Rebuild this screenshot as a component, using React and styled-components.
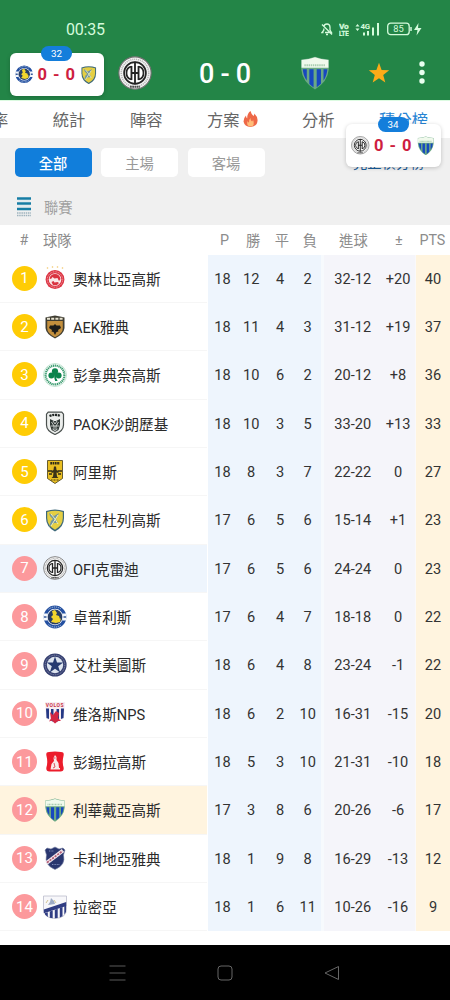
import React from 'react';
import styled, { createGlobalStyle } from 'styled-components';

const GlobalStyle = createGlobalStyle`
    * {
        box-sizing: border-box;
    }

    body {
        margin: 0;
        background: #fff;
        font-family: Roboto, "Noto Sans CJK TC", sans-serif;
        color: #333;
    }

    svg {
        display: block;
        flex: none;
    }
`;

const Screen = styled.div`
    position: relative;
    display: flex;
    flex-direction: column;
    width: 450px;
    height: 1000px;
    overflow: hidden;
    background: #fff;
`;

const Header = styled.header`
    height: 100px;
    background: #238547;
    color: #fff;
`;

const StatusBar = styled.div`
    display: flex;
    align-items: center;
    justify-content: space-between;
    height: 46px;
    padding: 12px 28px 0 66px;
    color: #d5fbdc;
    font-size: 16px;
    letter-spacing: -0.2px;
`;

const StatusIcons = styled.div`
    display: flex;
    align-items: center;
    gap: 6px;
`;

const MatchBar = styled.div`
    display: grid;
    grid-template-columns: 34px 146px 34px 22px 6px;
    column-gap: 0;
    align-items: center;
    height: 54px;
    padding-left: 118px;
`;

const MatchScore = styled.div`
    padding-top: 2px;
    text-align: center;
    font-size: 27px;
    font-weight: 500;
    letter-spacing: -0.3px;
    line-height: 30px;
`;

const StarIcon = styled.svg`
    margin-left: 36px;
`;

const MoreIcon = styled.svg`
    margin-left: 65px;
`;

const Tabs = styled.nav`
    display: flex;
    flex: none;
    align-items: center;
    height: 38px;
    margin-left: -8px;
    gap: 44.5px;
    padding-bottom: 1px;
    border-top: 1px solid #dcfbe1;
    font-size: 16.3px;
    white-space: nowrap;
`;

const Tab = styled.div`
    display: flex;
    align-items: center;
    gap: 3px;
    color: ${props => props.$active ? '#2784d3' : '#666'};
`;

const Filters = styled.section`
    height: 87px;
    flex: none;
    background: #f0f0f0;
`;

const FilterRow = styled.div`
    display: flex;
    align-items: center;
    gap: 9.5px;
    padding: 10px 0 0 14.5px;
`;

const FilterButton = styled.button`
    width: 77px;
    height: 29px;
    padding: 0 0 1px;
    border: none;
    border-radius: 5px;
    background: ${props => props.$active ? '#117edb' : '#fff'};
    color: ${props => props.$active ? '#fff' : '#999'};
    font-family: inherit;
    font-size: 14.3px;
    font-weight: ${props => props.$active ? 500 : 400};
`;

const TableLink = styled.span`
    display: flex;
    gap: 11px;
    margin: -3px 0 0 79px;
    color: #195d9b;
    font-size: 14.3px;
    white-space: nowrap;
`;

const League = styled.div`
    display: flex;
    align-items: center;
    gap: 13px;
    padding: 19px 0 0 17px;
    color: #a0a0a0;
    font-size: 14.3px;
    line-height: 20px;
`;

const LeagueName = styled.span`
    padding-top: 2px;
`;

const TableHead = styled.div`
    display: grid;
    grid-template-columns: 43px 167px 28.8px 28.8px 28.8px 27px 60px 31px 36px;
    align-items: center;
    flex: none;
    height: 29.6px;
    color: #8c8c8c;
    font-size: 14.3px;
    text-align: center;
    white-space: nowrap;
`;

const HeadLabel = styled.span`
    text-align: ${props => props.$left ? 'left' : 'center'};
    padding-left: ${props => props.$indent || 0}px;
`;

const Row = styled.div`
    display: grid;
    grid-template-columns: 208px 116px 92px 34px;
    flex: none;
    height: 48.34px;
    font-size: 14.6px;
`;

const Team = styled.div`
    display: grid;
    grid-template-columns: 25px 24px 1fr;
    column-gap: 6px;
    align-items: center;
    margin-right: 1px;
    padding-left: 12px;
    border-bottom: 1px solid #f6f6f6;
    background: ${props => props.$background || '#fff'};
    color: #2a2a2a;
    white-space: nowrap;
`;

const Rank = styled.span`
    display: flex;
    align-items: center;
    justify-content: center;
    width: 25px;
    height: 25px;
    border-radius: 50%;
    background: ${props => props.$top ? '#ffcc05' : '#fc999c'};
    color: #fff;
    font-size: 15px;
`;

const Record = styled.div`
    display: grid;
    grid-template-columns: 28.8px 28.8px 28.8px 26.6px;
    align-items: center;
    border-right: 3px solid #f7fafd;
    background: #eef5fd;
    text-align: center;
`;

const Goals = styled.div`
    display: grid;
    grid-template-columns: 57.5px 33px;
    align-items: center;
    border-right: 1.5px solid #faf9fa;
    background: #f5f5fa;
    text-align: center;
    white-space: nowrap;
`;

const Points = styled.div`
    display: flex;
    align-items: center;
    justify-content: center;
    background: #fff4df;
`;

const NavBar = styled.footer`
    display: flex;
    align-items: center;
    gap: 91px;
    height: 55px;
    margin-top: auto;
    padding-left: 109px;
    background: #000;
`;

const FloatingCard = styled.div`
    position: absolute;
    top: ${props => props.$top}px;
    left: ${props => props.$left}px;
    display: flex;
    align-items: center;
    justify-content: space-between;
    width: 94.5px;
    height: 43px;
    padding: 0 5px;
    border-radius: 6px;
    background: #fff;
    box-shadow: 0 1px 4px rgba(0, 0, 0, 0.2);
    color: #ce1e40;
    font-size: 16.5px;
    font-weight: 700;
    word-spacing: 2px;
`;

const Minute = styled.span`
    position: absolute;
    top: -7.5px;
    left: 31.5px;
    width: 31px;
    height: 15px;
    border-radius: 8px;
    background: #147edb;
    color: #fff;
    font-size: 9.8px;
    font-weight: 400;
    line-height: 15px;
    text-align: center;
`;

const shield = 'M3 3Q12 0 21 3V10Q21 19 12 23.5Q3 19 3 10Z';

const crests = {
    olympiacos: (
        <>
            <g fill="#f1c66b">
                <circle cx="4.5" cy="2" r=".8" />
                <circle cx="9.5" cy="1" r=".8" />
                <circle cx="14.5" cy="1" r=".8" />
                <circle cx="19.5" cy="2" r=".8" />
            </g>
            <circle cx="12" cy="13.5" r="9.4" fill="#dc3443" />
            <circle cx="12" cy="13.5" r="7.7" fill="none" stroke="#f4a9ae" strokeWidth=".9" strokeDasharray="1 .7" />
            <circle cx="12" cy="13.5" r="6.3" fill="#f9e9e9" />
            <path d="M6.5 12.5Q7.500 8 12 8t5.500 5l-1.500 2-1.500-3-3 .5-2-1.500-1.500 2z" fill="#d93340" />
            <path d="M8.500 16l2-1 1 1.500 3-.5 1.500 1-2 2h-4z" fill="#d93340" />
        </>
    ),
    aek: (
        <>
            <path d="M2.500 2.500L7 1.500 12 .5l5 1 4.500 1V13Q21 19 12 23.500 3 19 2.500 13z" fill="#3f3d32" />
            <path d="M4.200 6h15.600v7q0 5.500-7.800 9.200Q4.200 18.500 4.200 13z" fill="#c38f3d" />
            <path d="M4 3.800h16" stroke="#e8e3d0" strokeWidth="2" strokeDasharray="3 1.200" />
            <path d="M12 9l1.500 1.500L17 10.500l1 2.500-3 2 .5 1.500-2 .5L12 20l-1.500-3-2-.5L9 15l-3-2 1-2.500 3.500 0z" fill="#1d1c19" />
        </>
    ),
    panathinaikos: (
        <>
            <circle cx="12" cy="12" r="11.5" fill="#fff" stroke="#a8d8bf" strokeWidth=".7" />
            <circle cx="12" cy="12" r="9.4" fill="none" stroke="#3c9c70" strokeWidth="2.2" strokeDasharray="1.3 .6" />
            <g fill="#09834b">
                <circle cx="12" cy="8.3" r="3.1" />
                <circle cx="8.4" cy="12.4" r="3" />
                <circle cx="15.6" cy="12.4" r="3" />
                <path d="M11 11h2q-.5 4 1.6 7h-2.4Q11 15 11 11z" />
            </g>
        </>
    ),
    paok: (
        <>
            <path d="M5.2 1.2h13.6l1.700 2V14q0 6-8.500 9.500Q3.500 20 3.500 14V3.200z" fill="#eceeec" stroke="#4a504e" strokeWidth="1.200" />
            <path d="M6.500 5q5.500-2.300 11 0" fill="none" stroke="#202524" strokeWidth="2.300" strokeDasharray="2.100 .7" />
            <path d="M7 8l4 2h2l4-2v6l-1.500 5-3.500 2L8.500 19 7 14z" fill="#303735" />
            <path d="M8.500 11l2.500 4v4M15.500 11L13 15v4M10 10l2 3 2-3M7.800 15h8.400M9.500 18l2.500 2 2.500-2" stroke="#e5e7e5" strokeWidth=".8" fill="none" />
        </>
    ),
    aris: (
        <>
            <path d="M4.500.5h15v18L12 23.500 4.500 18.500z" fill="#eabf22" stroke="#453c17" strokeWidth=".8" />
            <path d="M7.300 3.300h9.500" stroke="#2c2918" strokeWidth="2.400" strokeDasharray="1.700 .6" />
            <path d="M11 6.500h2l.5 3.500 2 1v2l-2-.5.5 4 1.500 1.500h-7l1.500-1.500.5-4-2 .5v-2l2-1z" fill="#3b3218" />
            <path d="M5 11h4M15 11h4M6 14h3M15 14h3" stroke="#302a19" strokeWidth="1.300" />
            <path d="M8 20h8" stroke="#463b18" strokeWidth="1.200" strokeDasharray="1 .5" />
        </>
    ),
    panetolikos: (
        <>
            <path d={shield} fill="#3d6879" />
            <path d="M4.200 4Q12 1.500 19.800 4v6q0 7.500-7.800 11.700Q4.200 17.500 4.200 10z" fill="#e5cf43" />
            <path d="M6 5l5 3 5-3-3 6 2 4-4 0-5 4 2-6 2-2-3-3z" fill="#7295a0" />
            <path d="M8 6l4 5 3 5M15 7l-7 11" stroke="#edf0bd" strokeWidth="1" fill="none" />
        </>
    ),
    ofi: (
        <>
            <circle cx="12" cy="12" r="11.4" fill="#f4f4f4" stroke="#6f6f6f" strokeWidth=".8" />
            <circle cx="12" cy="12" r="9.700" fill="none" stroke="#b4b4b4" strokeWidth="1.100" strokeDasharray=".8 .6" />
            <circle cx="12" cy="12" r="7.700" fill="#fff" stroke="#242424" strokeWidth="1.200" />
            <path d="M12 4v16M9.500 12h5M9.500 7v10M14.500 7v10" fill="none" stroke="#242424" strokeWidth="1.300" />
            <path d="M9.500 7.500Q6 8 6 12t3.500 4.500M14.500 7.500Q18 8 18 12t-3.500 4.500" fill="none" stroke="#242424" strokeWidth="1.200" />
            <path d="M8.500 21.700h7" stroke="#4a4a4a" strokeWidth="1.500" strokeDasharray="1.200 .4" />
        </>
    ),
    asteras: (
        <>
            <circle cx="12" cy="12" r="9.800" fill="#fff" stroke="#2450a1" strokeWidth="3.200" />
            <path d="M.5 8.500h4v7h-4zM19.500 8.500h4v7h-4z" fill="#f4f7fb" />
            <path d="M1 12h2.500M20.500 12H23" stroke="#345a9a" strokeWidth="1.700" />
            <path d="M5.500 4.300q6.500-4.700 13 0M5.500 19.700q6.500 4.700 13 0" fill="none" stroke="#b4c6dd" strokeWidth="1" strokeDasharray="1.200 .8" />
            <circle cx="12" cy="12" r="7.400" fill="#273c64" />
            <path d="M9 6l3-1 2 3-1 2 3 1 1 3 1-1-1 4-4 1-5-1 2-3-2-2 2-2z" fill="#f3d52d" />
        </>
    ),
    atromitos: (
        <>
            <circle cx="12" cy="12" r="11.600" fill="#353f70" />
            <circle cx="12" cy="12" r="9.800" fill="none" stroke="#8991b0" strokeWidth="1" strokeDasharray="1 .8" />
            <circle cx="12" cy="12" r="8.200" fill="#dde4ee" />
            <path d="M12 3.500l2 6.100h6.200l-5 3.700 2 6.200-5.200-3.800-5.200 3.800 2-6.200-5-3.700H10z" fill="#263b70" />
        </>
    ),
    volos: (
        <>
            <path d="M2 1h20l-1 16.500-9 5.300-9-5.300z" fill="#f7edf1" />
            <path d="M3 7.500h3V18l-2.500-1zM8 8h2.500v13L8 19.500zM13.500 8H16v11.500L13.500 21zM18 7.500h3L20.500 17l-2.500 1z" fill="#253985" />
            <path d="M7 11l3 3 3-4 3 2-1 5 3 3-3 0-3 2.500-3-3-3 1 2-3z" fill="#d32642" />
            <text x="12" y="5.800" textAnchor="middle" fontSize="5" fontWeight="700" fill="#ca3447" letterSpacing=".5">VOLOS</text>
        </>
    ),
    aelkorydallos: (
        <>
            <path d="M6 2q6-1 12 0 3.500 0 2.500 4-1.500 6 0 11 1 4.500-3 4.500H6.500q-4 0-3-4.500 1.500-5 0-11Q2.500 2 6 2z" fill="#ec1c2b" />
            <path d="M12 5l1.500 2v3l2 3 .5 5h1v1.500H7.500L8.500 14l2.500-3-.5-3z" fill="#f9e9e9" />
            <path d="M11 13l1 4-2 1M10.500 8h2" stroke="#dd5360" fill="none" />
        </>
    ),
    levadiakos: (
        <>
            <path d="M2.300 2.500Q8 2 12 .6q4 1.400 9.700 1.900v7Q21 18 12 23.700 3 18 2.300 9.500z" fill="#6aa884" />
            <path d="M2.500 2.800Q8 2.300 12 .9q4 1.400 9.500 1.900v5.500h-19z" fill="#f0f9ec" />
            <path d="M4.500 6.500h15" stroke="#a9cdb0" strokeWidth="1.500" strokeDasharray="1 .5" />
            <path d="M3.400 9.300h2.800v8Q3.700 14 3.400 9.300zM8 9.300h3v12.900l-3-2.500zM13.200 9.300h3v10.200l-3 2.600zM18 9.300h2.700q-.3 4.700-2.700 8z" fill="#1747bf" />
        </>
    ),
    kallithea: (
        <>
            <path d="M4 2l4 1 4-2 4 2 4-1 2 2-1.500 5Q23 19 12 23.500 1 19 3.500 9L2 4z" fill="#29366f" stroke="#7983a6" strokeWidth=".6" />
            <path d="M3.500 17L20 4.500" stroke="#f1e7ec" strokeWidth="4" />
            <path d="M4 16.600L19.500 5" stroke="#b25a75" strokeWidth="1.700" strokeDasharray="2.200 1" />
            <path d="M9 18.500h8M6 5h5" stroke="#7c89b8" strokeDasharray="1 .6" />
        </>
    ),
    lamia: (
        <>
            <path d="M.5 1h23v13q0 9-11.500 9.500Q.5 23 .5 14z" fill="#f7f7fa" stroke="#bbbccb" strokeWidth=".8" />
            <path d="M.8 14.500L23.200 7v4L.8 18.300z" fill="#303d83" />
            <path d="M2 18l2.800-.8V22L2 19.500zM6.800 16.500l2.900-1v7.800l-2.900-.5zM11.800 14.700l2.900-1v9.400l-2.900.2zM16.800 12.800l2.700-.9v9.300l-2.700 1.200zM21.300 11l1.700-.5V17l-1.700 2.500z" fill="#303d83" />
            <path d="M5 10l2-3 1-4 3 3 1 3z" fill="#9dabc4" />
            <path d="M3 8l2-3M11 5l2 3" stroke="#d4c591" />
        </>
    ),
};

function Crest({ name, size = 24 }) {
    return <svg width={size} height={size} viewBox="0 0 24 24">{crests[name]}</svg>;
}

const teams = [
    ['olympiacos', '奧林比亞高斯', [18, 12, 4, 2], '32-12', '+20', 40],
    ['aek', 'AEK雅典', [18, 11, 4, 3], '31-12', '+19', 37],
    ['panathinaikos', '彭拿典奈高斯', [18, 10, 6, 2], '20-12', '+8', 36],
    ['paok', 'PAOK沙朗歷基', [18, 10, 3, 5], '33-20', '+13', 33],
    ['aris', '阿里斯', [18, 8, 3, 7], '22-22', '0', 27],
    ['panetolikos', '彭尼杜列高斯', [17, 6, 5, 6], '15-14', '+1', 23],
    ['ofi', 'OFI克雷迪', [17, 6, 5, 6], '24-24', '0', 23, '#eef5fd'],
    ['asteras', '卓普利斯', [17, 6, 4, 7], '18-18', '0', 22],
    ['atromitos', '艾杜美圖斯', [18, 6, 4, 8], '23-24', '-1', 22],
    ['volos', '维洛斯NPS', [18, 6, 2, 10], '16-31', '-15', 20],
    ['aelkorydallos', '彭錫拉高斯', [18, 5, 3, 10], '21-31', '-10', 18],
    ['levadiakos', '利華戴亞高斯', [17, 3, 8, 6], '20-26', '-6', 17, '#fff4df'],
    ['kallithea', '卡利地亞雅典', [18, 1, 9, 8], '16-29', '-13', 12],
    ['lamia', '拉密亞', [18, 1, 6, 11], '10-26', '-16', 9],
];

function PhoneStatus() {
    return (
        <StatusBar>
            <span>00:35</span>
            <StatusIcons>
                <svg width="12" height="14" viewBox="0 0 12 14" fill="none" stroke="#d5fbdc" strokeWidth="1.3">
                    <path d="M3 4.500Q3.300 2 6 2t3 3v3l1.500 2.500H4M2.800 6.500v1.700L1 10.500h1.500M5 12.500h2M1 2.500l10 10" />
                </svg>
                <svg width="10" height="14" viewBox="0 0 10 14" fill="#d5fbdc" stroke="#d5fbdc" strokeWidth=".3" fontSize="8" fontWeight="700">
                    <text x="0" y="6.500" textLength="9.500" lengthAdjust="spacingAndGlyphs">Vo</text>
                    <text x="0" y="13.500" textLength="9.500" lengthAdjust="spacingAndGlyphs">LTE</text>
                </svg>
                <svg width="25" height="14" viewBox="0 0 25 14" fill="#d5fbdc">
                    <path d="M.5 4.500L2.500 2l2 2.500zM.5 6.500h4L2.500 9zM8 10.500h2v3H8zM12 9h2v4.500h-2zM17 5.500h2v8h-2zM22 1h2v12.500h-2z" />
                    <text x="5.500" y="7" fontSize="8" fontWeight="700" textLength="9.500" lengthAdjust="spacingAndGlyphs">4G</text>
                </svg>
                <svg width="36" height="14" viewBox="0 0 36 14" fill="none" stroke="#d5fbdc">
                    <rect x="1.700" y="1.200" width="21.500" height="11.500" rx="3" strokeWidth="1.300" />
                    <path d="M25 5v4" strokeWidth="1.500" />
                    <text x="12.400" y="10.300" textAnchor="middle" fontSize="9.300" fill="#d5fbdc" stroke="none">85</text>
                    <path d="M32.500 1L28 8h3.500l-1 5.500L35.500 6H32z" fill="#d5fbdc" stroke="none" />
                </svg>
            </StatusIcons>
        </StatusBar>
    );
}

function Flame() {
    return (
        <svg width="15" height="18" viewBox="0 0 15 18">
            <path d="M7.500 1q.7 3 3 5 1-1 .8-2.500Q15 7 14.500 11q-.5 5.500-7 6-6-.5-7-5.500Q.5 8 3 5.500q0 2 1.200 3Q4 3.500 7.500 1z" fill="#ee6847" />
            <path d="M7.500 8q-.3 2 1.500 3.500 1-.7 1-2Q12.500 16 7.500 16.500 3 16 4.500 11q.7 1.500 1.500 1.500Q5.500 10 7.500 8z" fill="#ffbd78" />
        </svg>
    );
}

function ScoreCard({ top, left, minute, home, away }) {
    return (
        <FloatingCard $top={top} $left={left}>
            <Crest name={home} size={18.5} />
            <span>0 - 0</span>
            <Crest name={away} size={19.5} />
            <Minute>{minute}</Minute>
        </FloatingCard>
    );
}

function TeamRow({ team, rank }) {
    const [crest, name, record, goals, diff, points, background] = team;

    return (
        <Row>
            <Team $background={background}>
                <Rank $top={rank < 7}>{rank}</Rank>
                <Crest name={crest} />
                <span>{name}</span>
            </Team>
            <Record>
                {record.map((value, i) => <span key={i}>{value}</span>)}
            </Record>
            <Goals>
                <span>{goals}</span>
                <span>{diff}</span>
            </Goals>
            <Points>{points}</Points>
        </Row>
    );
}

function App() {
    return (
        <Screen>
            <GlobalStyle />
            <Header>
                <PhoneStatus />
                <MatchBar>
                    <Crest name="ofi" size={34} />
                    <MatchScore>0 - 0</MatchScore>
                    <Crest name="levadiakos" size={34} />
                    <StarIcon width="22" height="22" viewBox="0 0 22 22">
                        <path d="M11 .8l2.600 7.300 7.600.2-6 4.800 2.100 7.500-6.300-4.300-6.300 4.300 2.100-7.500-6-4.800 7.600-.2z" fill="#fcab18" />
                    </StarIcon>
                    <MoreIcon width="6" height="24" viewBox="0 0 6 24" fill="#e9fff0">
                        <circle cx="3" cy="3" r="2.700" />
                        <circle cx="3" cy="11.500" r="2.700" />
                        <circle cx="3" cy="20" r="2.700" />
                    </MoreIcon>
                </MatchBar>
            </Header>
            <Tabs>
                <Tab>率</Tab>
                <Tab>統計</Tab>
                <Tab>陣容</Tab>
                <Tab>方案<Flame /></Tab>
                <Tab>分析</Tab>
                <Tab $active>積分榜</Tab>
            </Tabs>
            <Filters>
                <FilterRow>
                    <FilterButton $active>全部</FilterButton>
                    <FilterButton>主場</FilterButton>
                    <FilterButton>客場</FilterButton>
                    <TableLink><span>完整積分榜</span><span>›</span></TableLink>
                </FilterRow>
                <League>
                    <svg width="14" height="20" viewBox="0 0 14 20">
                        <path d="M0 1.500h14M0 6.500h14M0 12h14" stroke="#167da5" strokeWidth="2.500" />
                        <path d="M1 4h12M1 9h12" stroke="#d5e6ee" />
                        <path d="M0 16h14M0 18.500h14" stroke="#9db2bd" strokeWidth="1.500" strokeDasharray="1.500 .7" />
                    </svg>
                    <LeagueName>聯賽</LeagueName>
                </League>
            </Filters>
            <TableHead>
                <HeadLabel $indent={5}>#</HeadLabel>
                <HeadLabel $left>球隊</HeadLabel>
                <span>P</span>
                <span>勝</span>
                <span>平</span>
                <span>負</span>
                <span>進球</span>
                <span>±</span>
                <span>PTS</span>
            </TableHead>
            {teams.map((team, i) => <TeamRow key={team[0]} team={team} rank={i + 1} />)}
            <NavBar>
                <svg width="17" height="16" viewBox="0 0 17 16" stroke="#5a5a5a">
                    <path d="M.5 1h16M.5 8h16M.5 15h16" />
                </svg>
                <svg width="16" height="16" viewBox="0 0 16 16" fill="none" stroke="#666">
                    <rect x="1" y="1" width="14" height="14" rx="3" />
                </svg>
                <svg width="16" height="16" viewBox="0 0 16 16" fill="none" stroke="#666" strokeLinejoin="round">
                    <path d="M14.500 1.500v13L1 8z" />
                </svg>
            </NavBar>
            <ScoreCard top={53} left={9.5} minute={32} home="asteras" away="panetolikos" />
            <ScoreCard top={124} left={346} minute={34} home="ofi" away="levadiakos" />
        </Screen>
    );
}

export default App;
